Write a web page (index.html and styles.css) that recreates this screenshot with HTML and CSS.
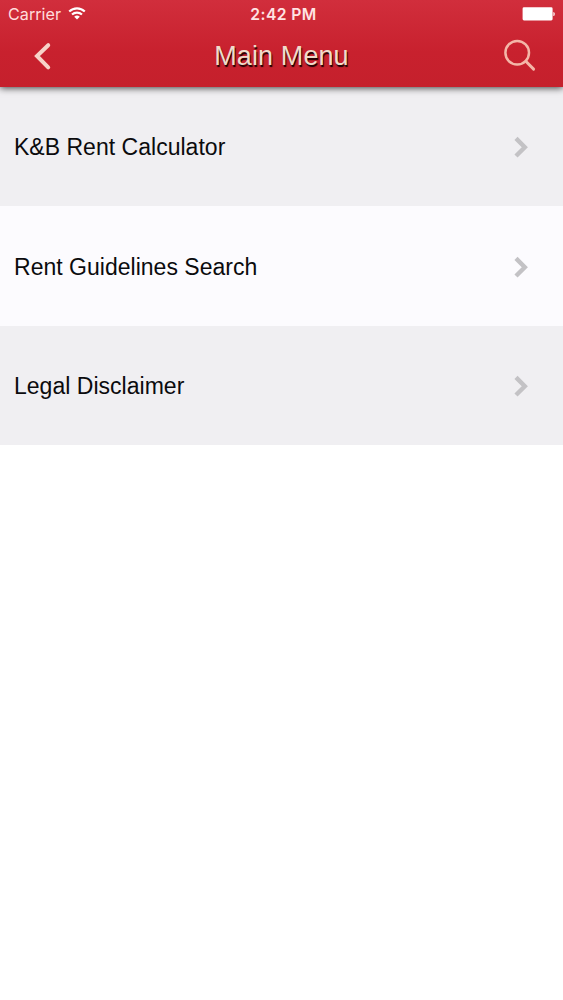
FILE: index.html
```html
<!DOCTYPE html>
<html lang="en">
<head>
<meta charset="utf-8">
<title>Main Menu</title>
<link rel="stylesheet" href="styles.css">
</head>
<body>
<header class="header">
  <div class="status">
    <div class="carrier"><span>Carrier</span>
      <svg class="wifi" width="18" height="13" viewBox="0 0 18 13" fill="none" stroke="currentColor" stroke-width="2.1"><path d="M1.2 4.6a11.1 11.1 0 0 1 15.6 0M4 7.6a7.2 7.2 0 0 1 10 0"/><path d="M9 12.6 6.2 9.8a4 4 0 0 1 5.6 0z" fill="currentColor" stroke="none"/></svg>
    </div>
    <time class="time">2:42 PM</time>
    <svg class="battery" width="34" height="14" viewBox="0 0 34 14" fill="currentColor"><rect x="0.6" y="0.3" width="30" height="13.2" rx="1.4"/><path d="M31.4 4.9c1.8.2 1.8 4 0 4.2z"/></svg>
  </div>
  <nav class="navbar">
    <svg class="back" width="20" height="30" viewBox="0 0 20 30" fill="none" stroke="currentColor" stroke-width="4" stroke-linecap="round" stroke-linejoin="miter"><path d="M16.2 4.2 5 15 16.2 26.3"/></svg>
    <h1 class="title">Main Menu</h1>
    <svg class="search" width="34" height="34" viewBox="0 0 34 34" fill="none" stroke="currentColor" stroke-width="2.5" stroke-linecap="round"><circle cx="14.2" cy="13.7" r="11.8"/><path stroke-width="2.9" d="m22.8 22.3 7.8 7.8"/></svg>
  </nav>
</header>
<main class="menu">
  <a class="item"><span>K&amp;B Rent Calculator</span><svg class="chevron" width="16" height="24" viewBox="0 0 16 24"><path d="m3 3.4 8.8 8.8L3 21"/></svg></a>
  <a class="item item-light"><span>Rent Guidelines Search</span><svg class="chevron" width="16" height="24" viewBox="0 0 16 24"><path d="m3 3.4 8.8 8.8L3 21"/></svg></a>
  <a class="item"><span>Legal Disclaimer</span><svg class="chevron" width="16" height="24" viewBox="0 0 16 24"><path d="m3 3.4 8.8 8.8L3 21"/></svg></a>
</main>
</body>
</html>
```
FILE: styles.css
```css
* { box-sizing: border-box; }
body {
  margin: 0;
  min-height: 1000px;
  background: #fff;
  font-family: "Liberation Sans", Arial, sans-serif;
}
.header {
  position: relative;
  height: 87px;
  background: linear-gradient(#d12e3c, #c8212e 60%, #c5202c);
  box-shadow: 0 1px 7px rgba(0, 0, 0, .75);
}
.status {
  display: grid;
  grid-template-columns: 1fr auto 1fr;
  align-items: center;
  height: 28px;
  padding: 0 7px 0 8px;
  color: #fff;
  font: 16.2px/28px Inter, sans-serif;
}
.carrier {
  display: flex;
  align-items: center;
  gap: 7px;
  color: #ffdcdc;
}
.wifi { color: #fff; margin-top: -1px; }
.time {
  padding: 2px 0 0 3px;
  color: #ffe3e3;
  font-size: 15.7px;
  font-weight: 600;
  line-height: 26px;
  letter-spacing: .4px;
}
.battery { justify-self: end; }
.navbar {
  display: grid;
  grid-template-columns: 1fr auto 1fr;
  align-items: center;
  height: 56px;
  padding: 0 26px;
  color: #f7d3c8;
}
.back { margin-left: 6px; }
.title {
  margin: 0;
  color: #f0dccb;
  font-size: 27px;
  font-weight: 400;
  line-height: 32px;
  letter-spacing: .1px;
  text-shadow: 1px 1.5px 1px #190000;
}
.search { justify-self: end; color: #f4b6a8; }
.item {
  display: flex;
  align-items: center;
  justify-content: space-between;
  height: 119.4px;
  padding: 1px 34px 0 14px;
  background: #f0eff2;
  color: #0b0b0d;
  font-size: 23px;
  line-height: 28px;
  letter-spacing: .02px;
}
.item-light { background: #fcfbfe; }
.chevron {
  fill: none;
  stroke: #c3c2c5;
  stroke-width: 4.4;
}
```
